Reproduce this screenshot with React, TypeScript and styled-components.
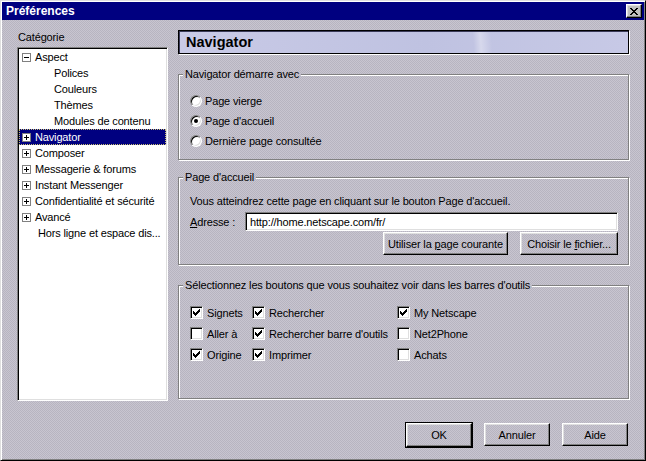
import React from 'react'
import styled, { createGlobalStyle, css } from 'styled-components'

const GlobalStyle = createGlobalStyle`
  html, body {
    margin: 0;
    padding: 0;
    background: #c0bdc8;
  }
  body {
    font-family: "Liberation Sans", Arial, sans-serif;
    font-size: 11px;
    letter-spacing: -0.15px;
    color: #000;
  }
  * { box-sizing: border-box; }
`

const dither = css`
  background: repeating-conic-gradient(#c8c5d0 0 25%, #b7b4c0 0 50%) 0 0 / 2px 2px fixed;
`

const sunken = css`
  border: 1px solid;
  border-color: #808080 #fff #fff #808080;
  box-shadow: inset 1px 1px 0 #000, inset -1px -1px 0 #dfdfdf;
`

const Window = styled.div`
  width: 646px;
  height: 461px;
  padding: 1px;
  display: flex;
  flex-direction: column;
  border: 1px solid;
  border-color: #dfdfdf #000 #000 #dfdfdf;
  box-shadow: inset 1px 1px 0 #fff, inset -1px -1px 0 #808080;
  ${dither}
`

const TitleBar = styled.div`
  height: 18px;
  background: #000080;
  display: flex;
  align-items: center;
  justify-content: space-between;
  padding: 0 2px 0 4px;
`

const TitleText = styled.span`
  color: #fff;
  font-weight: bold;
  font-size: 12px;
  letter-spacing: 0;
`

const CloseButton = styled.div`
  width: 16px;
  height: 14px;
  display: flex;
  align-items: center;
  justify-content: center;
  background: #c0c0c0;
  border: 1px solid;
  border-color: #fff #000 #000 #fff;
  box-shadow: inset -1px -1px 0 #808080, inset 1px 1px 0 #dfdfdf;
`

const Body = styled.div`
  flex: 1;
  display: flex;
  flex-direction: column;
  padding: 10px 15px 0 15px;
`

const Main = styled.div`
  display: flex;
  gap: 10px;
`

const LeftColumn = styled.div`
  width: 151px;
  display: flex;
  flex-direction: column;
`

const CategoryLabel = styled.div`
  line-height: 14px;
  padding-left: 1px;
  margin-bottom: 3px;
`

const Tree = styled.div`
  height: 354px;
  background: #fff;
  padding: 1px;
  ${sunken}
`

const TreeRow = styled.div<{ $indent: number; $selected?: boolean }>`
  height: 16px;
  display: flex;
  align-items: center;
  gap: 4px;
  padding-left: ${p => p.$indent}px;
  white-space: nowrap;
  background: ${p => (p.$selected ? '#000080' : 'transparent')};
  color: ${p => (p.$selected ? '#fff' : '#000')};
  outline: ${p => (p.$selected ? '1px dotted #c8c070' : 'none')};
  outline-offset: -1px;
`

const Expander = styled.span`
  width: 9px;
  height: 9px;
  flex: none;
  display: flex;
  background: #fff;
  border: 1px solid #808080;
`

const RightColumn = styled.div`
  width: 451px;
  display: flex;
  flex-direction: column;
`

const Header = styled.div`
  height: 24px;
  display: flex;
  align-items: center;
  padding-left: 7px;
  font-size: 14.5px;
  font-weight: bold;
  letter-spacing: 0;
  border: 1px solid #000;
  box-shadow: inset 1px 1px 0 #3a3a58, 1px 1px 0 #fff;
  background:
    radial-gradient(circle at 18% 130%, transparent 58%, rgba(255, 255, 255, 0.35) 60%, transparent 63%),
    linear-gradient(90deg, #c9cae6, #bfc2e1 55%, #c7c9e6);
`

const Group = styled.div<{ $height: number; $top: number }>`
  height: ${p => p.$height}px;
  margin-top: ${p => p.$top}px;
  border: 1px solid #808080;
  box-shadow: inset 1px 1px 0 #fff, 1px 1px 0 #fff;
`

const GroupTitle = styled.div`
  width: fit-content;
  margin: -7px 0 0 4px;
  padding: 0 2px;
  line-height: 13px;
  ${dither}
`

const RadioList = styled.div`
  padding: 10px 0 0 11px;
`

const OptionRow = styled.label`
  height: 20px;
  display: flex;
  align-items: center;
  gap: 3px;
`

const Radio = styled.span<{ $checked?: boolean }>`
  width: 12px;
  height: 12px;
  flex: none;
  border-radius: 50%;
  background: #fff;
  border: 1px solid;
  border-color: #808080 #fff #fff #808080;
  box-shadow: inset 1px 1px 0 #000, inset -1px -1px 0 #dfdfdf;
  display: flex;
  align-items: center;
  justify-content: center;
  &::after {
    content: '';
    width: 4px;
    height: 4px;
    border-radius: 50%;
    background: ${p => (p.$checked ? '#000' : 'transparent')};
  }
`

const Paragraph = styled.div`
  line-height: 14px;
  margin: 10px 0 0 11px;
`

const AddressRow = styled.div`
  display: flex;
  align-items: center;
  margin: 4px 10px 0 11px;
`

const AddressLabel = styled.span`
  width: 55px;
  flex: none;
`

const Input = styled.div`
  flex: 1;
  height: 19px;
  background: #fff;
  display: flex;
  align-items: center;
  padding-left: 4px;
  ${sunken}
`

const ButtonRow = styled.div<{ $right: number; $gap: number }>`
  display: flex;
  justify-content: flex-end;
  gap: ${p => p.$gap}px;
  padding-right: ${p => p.$right}px;
`

const Button = styled.div<{ $width: number; $default?: boolean }>`
  width: ${p => p.$width}px;
  height: ${p => (p.$default ? 24 : 23)}px;
  display: flex;
  align-items: center;
  justify-content: center;
  border: 1px solid;
  border-color: #fff #000 #000 #fff;
  box-shadow: inset -1px -1px 0 #808080, inset 1px 1px 0 #dfdfdf;
  ${dither}
  ${p =>
    p.$default &&
    css`
      outline: 1px solid #000;
      outline-offset: 0;
    `}
`

const InlineButtons = styled(ButtonRow)`
  margin-top: 1px;
`

const CheckGrid = styled.div`
  display: grid;
  grid-template-columns: 62px 145px 1fr;
  grid-auto-rows: 21px;
  padding: 10px 0 0 11px;
`

const CheckItem = styled.label`
  display: flex;
  align-items: center;
  gap: 4px;
  white-space: nowrap;
`

const CheckBox = styled.span`
  width: 13px;
  height: 13px;
  flex: none;
  background: #fff;
  display: flex;
  align-items: center;
  justify-content: center;
  ${sunken}
`

const Footer = styled(ButtonRow)`
  margin-top: 22px;
`

const CHECK_COLS = [2, 3, 4, 3, 2, 1, 0]

function CheckMark() {
  return (
    <svg width="7" height="7" viewBox="0 0 7 7" shapeRendering="crispEdges">
      {CHECK_COLS.map((y, x) => (
        <rect key={x} x={x} y={y} width="1" height="3" fill="#000" />
      ))}
    </svg>
  )
}

function Sign({ open }: { open: boolean }) {
  return (
    <svg width="7" height="7" viewBox="0 0 7 7" shapeRendering="crispEdges">
      <rect x="1" y="3" width="5" height="1" fill="#000" />
      {!open && <rect x="3" y="1" width="1" height="5" fill="#000" />}
    </svg>
  )
}

type TreeItem = { label: string; indent: number; sign?: 'open' | 'closed'; selected?: boolean }

const TREE: TreeItem[] = [
  { label: 'Aspect', indent: 3, sign: 'open' },
  { label: 'Polices', indent: 35 },
  { label: 'Couleurs', indent: 35 },
  { label: 'Thèmes', indent: 35 },
  { label: 'Modules de contenu', indent: 35 },
  { label: 'Navigator', indent: 3, sign: 'closed', selected: true },
  { label: 'Composer', indent: 3, sign: 'closed' },
  { label: 'Messagerie & forums', indent: 3, sign: 'closed' },
  { label: 'Instant Messenger', indent: 3, sign: 'closed' },
  { label: 'Confidentialité et sécurité', indent: 3, sign: 'closed' },
  { label: 'Avancé', indent: 3, sign: 'closed' },
  { label: 'Hors ligne et espace dis...', indent: 19 },
]

const RADIOS = [
  { label: 'Page vierge', checked: false },
  { label: "Page d'accueil", checked: true },
  { label: 'Dernière page consultée', checked: false },
]

const TOOLBAR: [string, boolean][] = [
  ['Signets', true],
  ['Rechercher', true],
  ['My Netscape', true],
  ['Aller à', false],
  ["Rechercher barre d'outils", true],
  ['Net2Phone', false],
  ['Origine', true],
  ['Imprimer', true],
  ['Achats', false],
]

export default function App() {
  return (
    <>
      <GlobalStyle />
      <Window>
        <TitleBar>
          <TitleText>Préférences</TitleText>
          <CloseButton>
            <svg width="8" height="7" viewBox="0 0 8 7" shapeRendering="crispEdges">
              <path d="M0 0h2v1h-2zM6 0h2v1h-2zM1 1h2v1h-2zM5 1h2v1h-2zM2 2h4v1h-4zM3 3h2v1h-2zM2 4h4v1h-4zM1 5h2v1h-2zM5 5h2v1h-2zM0 6h2v1h-2zM6 6h2v1h-2z" fill="#000" />
            </svg>
          </CloseButton>
        </TitleBar>
        <Body>
          <Main>
            <LeftColumn>
              <CategoryLabel>Catégorie</CategoryLabel>
              <Tree>
                {TREE.map(item => (
                  <TreeRow key={item.label} $indent={item.indent} $selected={item.selected}>
                    {item.sign && (
                      <Expander>
                        <Sign open={item.sign === 'open'} />
                      </Expander>
                    )}
                    <span>{item.label}</span>
                  </TreeRow>
                ))}
              </Tree>
            </LeftColumn>
            <RightColumn>
              <Header>Navigator</Header>
              <Group $height={86} $top={20}>
                <GroupTitle>Navigator démarre avec</GroupTitle>
                <RadioList>
                  {RADIOS.map(r => (
                    <OptionRow key={r.label}>
                      <Radio $checked={r.checked} />
                      {r.label}
                    </OptionRow>
                  ))}
                </RadioList>
              </Group>
              <Group $height={88} $top={17}>
                <GroupTitle>Page d'accueil</GroupTitle>
                <Paragraph>Vous atteindrez cette page en cliquant sur le bouton Page d'accueil.</Paragraph>
                <AddressRow>
                  <AddressLabel>
                    <u>A</u>dresse :
                  </AddressLabel>
                  <Input>http://home.netscape.com/fr/</Input>
                </AddressRow>
                <InlineButtons $right={10} $gap={12}>
                  <Button $width={125}>
                    <span>
                      Utiliser la <u>p</u>age courante
                    </span>
                  </Button>
                  <Button $width={98}>
                    <span>
                      Choisir le <u>f</u>ichier...
                    </span>
                  </Button>
                </InlineButtons>
              </Group>
              <Group $height={114} $top={20}>
                <GroupTitle>Sélectionnez les boutons que vous souhaitez voir dans les barres d'outils</GroupTitle>
                <CheckGrid>
                  {TOOLBAR.map(([label, checked]) => (
                    <CheckItem key={label}>
                      <CheckBox>{checked && <CheckMark />}</CheckBox>
                      {label}
                    </CheckItem>
                  ))}
                </CheckGrid>
              </Group>
            </RightColumn>
          </Main>
          <Footer $right={1} $gap={12}>
            <Button $width={66} $default>
              OK
            </Button>
            <Button $width={66}>Annuler</Button>
            <Button $width={66}>Aide</Button>
          </Footer>
        </Body>
      </Window>
    </>
  )
}
